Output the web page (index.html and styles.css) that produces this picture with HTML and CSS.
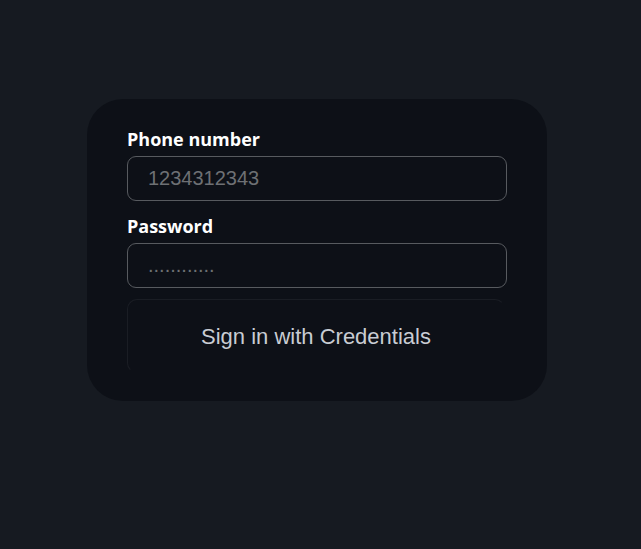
FILE: index.html
```html
<!DOCTYPE html>
<html>
<head>
<meta charset="utf-8">
<link rel="stylesheet" href="styles.css">
</head>
<body>
<div class="page">
  <form class="card">
    <label class="label" for="phone">Phone number</label>
    <input class="field" id="phone" type="text" placeholder="1234312343">
    <label class="label label-2" for="pw">Password</label>
    <input class="field" id="pw" type="text" placeholder="............">
    <button class="btn" type="button">Sign in with Credentials</button>
  </form>
</div>
</body>
</html>
```
FILE: styles.css
```css
html, body {
  margin: 0;
  padding: 0;
  background: #161a21;
  height: 100%;
}
.page {
  padding: 99px 0 0 87px;
}
.card {
  width: 380px;
  padding: 28px 40px 28px 40px;
  background: #0d1017;
  border-radius: 36px;
  display: flex;
  flex-direction: column;
}
.label {
  font-family: "Open Sans", "Noto Sans", sans-serif;
  font-weight: 700;
  font-size: 18px;
  line-height: 25px;
  color: #ffffff;
  margin-bottom: 4px;
}
.label-2 {
  margin-top: 13px;
  margin-bottom: 4px;
}
.field {
  box-sizing: border-box;
  width: 380px;
  height: 45px;
  border: 1px solid #575a5f;
  border-radius: 9px;
  background: #0d1017;
  padding: 0 20px;
  font-family: "Liberation Sans", Arial, sans-serif;
  font-size: 20px;
  color: #d0d0d0;
  outline: none;
}
.field::placeholder {
  color: #6e7074;
}
.btn {
  box-sizing: border-box;
  margin-top: 11px;
  width: 378px;
  height: 74px;
  background: #0d1017;
  border: 1px solid transparent;
  border-top-color: #1a1d24;
  border-left-color: #1a1d24;
  border-radius: 10px;
  font-family: "Liberation Sans", Arial, sans-serif;
  font-size: 22px;
  color: #c8ccd3;
  padding: 2px 0 0 0;
}
```
